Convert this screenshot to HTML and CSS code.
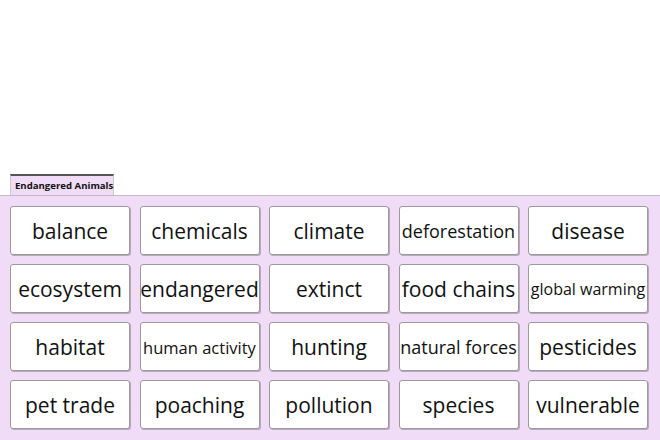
FILE: index.html
```html
<!DOCTYPE html>
<html>
<head>
<meta charset="utf-8">
<link rel="stylesheet" href="styles.css">
</head>
<body>
<div class="top"></div>
<div class="tabs"><div class="tab">Endangered Animals</div></div>
<div class="panel">
  <div class="grid">
    <div class="card">balance</div>
    <div class="card">chemicals</div>
    <div class="card">climate</div>
    <div class="card sm">deforestation</div>
    <div class="card">disease</div>
    <div class="card">ecosystem</div>
    <div class="card">endangered</div>
    <div class="card">extinct</div>
    <div class="card">food chains</div>
    <div class="card xs">global warming</div>
    <div class="card">habitat</div>
    <div class="card xs2">human activity</div>
    <div class="card">hunting</div>
    <div class="card sm">natural forces</div>
    <div class="card">pesticides</div>
    <div class="card">pet trade</div>
    <div class="card">poaching</div>
    <div class="card">pollution</div>
    <div class="card">species</div>
    <div class="card">vulnerable</div>
  </div>
</div>
</body>
</html>
```
FILE: styles.css
```css
html, body {
  margin: 0;
  padding: 0;
  background: #ffffff;
  width: 660px;
  height: 440px;
  overflow: hidden;
}
.top {
  height: 174px;
}
.tabs {
  display: flex;
  padding-left: 10px;
}
.tab {
  width: 104px;
  height: 21px;
  box-sizing: border-box;
  border-top: 2px solid #555;
  border-left: 1px solid #c8c8c8;
  border-right: 1px solid #c8c8c8;
  background: #f0dcf7;
  font-family: "Open Sans", sans-serif;
  font-weight: 700;
  font-size: 9.6px;
  color: #111;
  padding: 4px 0 0 4px;
  line-height: 12px;
  white-space: nowrap;
}
.panel {
  background: #f0dcf7;
  border-top: 1px solid #c4b8c8;
  height: 260px;
  padding: 10px 0 0 10px;
  box-sizing: border-box;
}
.grid {
  display: grid;
  grid-template-columns: repeat(5, 120px);
  column-gap: 9.5px;
  row-gap: 9px;
}
.card {
  height: 49px;
  box-sizing: border-box;
  background: #ffffff;
  border: 1px solid #9a9a9a;
  border-radius: 3px;
  box-shadow: 1px 1px 0 #b9a9be;
  display: flex;
  align-items: center;
  justify-content: center;
  font-family: "Open Sans", sans-serif;
  font-size: 21px;
  color: #111;
  white-space: nowrap;
  padding-top: 1px;
}
.card.sm {
  font-size: 18px;
}
.card.xs {
  font-size: 16px;
}
.card.xs2 {
  font-size: 16.5px;
}
```
